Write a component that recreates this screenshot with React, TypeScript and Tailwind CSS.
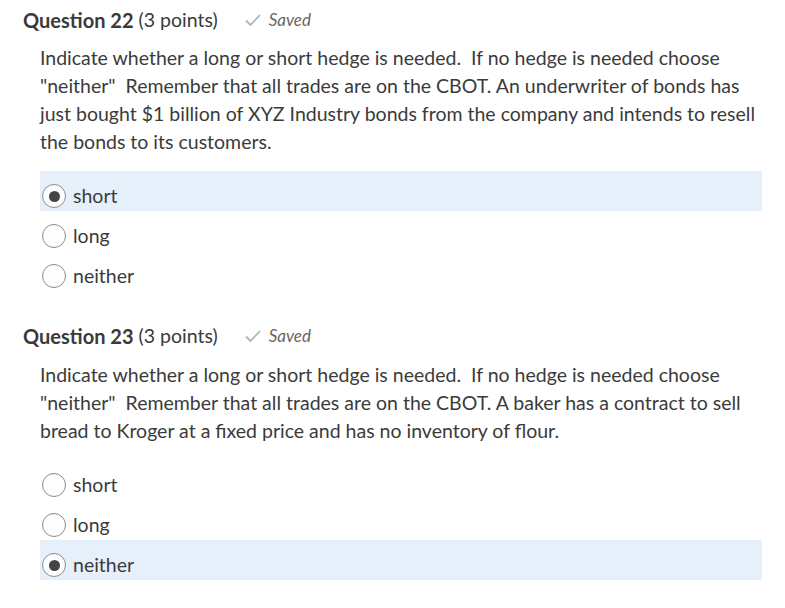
import React from "react";

function Radio({ checked }: { checked: boolean }) {
  return (
    <span className="flex h-[24px] w-[24px] shrink-0 items-center justify-center rounded-full border border-[#8a8a8a] bg-[#fcfdff]">
      {checked && <span className="h-[11px] w-[11px] rounded-full bg-[#444]" />}
    </span>
  );
}

function Option({ label, checked }: { label: string; checked: boolean }) {
  return (
    <div className={`flex h-[40px] items-center pl-[2px] pt-[10px] ${checked ? "bg-[#e6f0fb]" : ""}`}>
      <Radio checked={checked} />
      <span className="ml-[7px] text-[19.5px] text-[#3b3b3b]">{label}</span>
    </div>
  );
}

function Header({ n }: { n: number }) {
  return (
    <div className="flex h-[28px] items-center pl-[23px]">
      <span className="text-[20px] font-bold text-[#3a3a3a]">Question {n}</span>
      <span className="ml-[5px] text-[19.5px] text-[#3a3a3a]">(3 points)</span>
      <svg className="ml-[26px]" width="18" height="14" viewBox="0 0 18 14">
        <path d="M2 7.5 L6.5 12 L16 2" fill="none" stroke="#b0b4b7" strokeWidth="1.8" />
      </svg>
      <span className="ml-[7px] text-[17px] italic text-[#666]">Saved</span>
    </div>
  );
}

export default function App() {
  return (
    <div className="min-h-[608px] w-[785px] bg-white pt-[6px] text-[#3b3b3b]" style={{ fontFamily: "Lato, 'Open Sans', sans-serif" }}>
      <Header n={22} />
      <div className="ml-[40px] mt-[10px] w-[722px] whitespace-pre text-[19.5px] leading-[28px] text-[#3b3b3b]">
        <div>Indicate whether a long or short hedge is needed.  If no hedge is needed choose</div>
        <div>"neither"  Remember that all trades are on the CBOT. An underwriter of bonds has</div>
        <div>just bought $1 billion of XYZ Industry bonds from the company and intends to resell</div>
        <div>the bonds to its customers.</div>
      </div>
      <div className="ml-[40px] mt-[15px] w-[722px]">
        <Option label="short" checked />
        <Option label="long" checked={false} />
        <Option label="neither" checked={false} />
      </div>
      <div className="mt-[31px]">
        <Header n={23} />
      </div>
      <div className="ml-[40px] mt-[11px] w-[722px] whitespace-pre text-[19.5px] leading-[28px] text-[#3b3b3b]">
        <div>Indicate whether a long or short hedge is needed.  If no hedge is needed choose</div>
        <div>"neither"  Remember that all trades are on the CBOT. A baker has a contract to sell</div>
        <div>bread to Kroger at a fixed price and has no inventory of flour.</div>
      </div>
      <div className="ml-[40px] mt-[15px] w-[722px]">
        <Option label="short" checked={false} />
        <Option label="long" checked={false} />
        <Option label="neither" checked />
      </div>
    </div>
  );
}
